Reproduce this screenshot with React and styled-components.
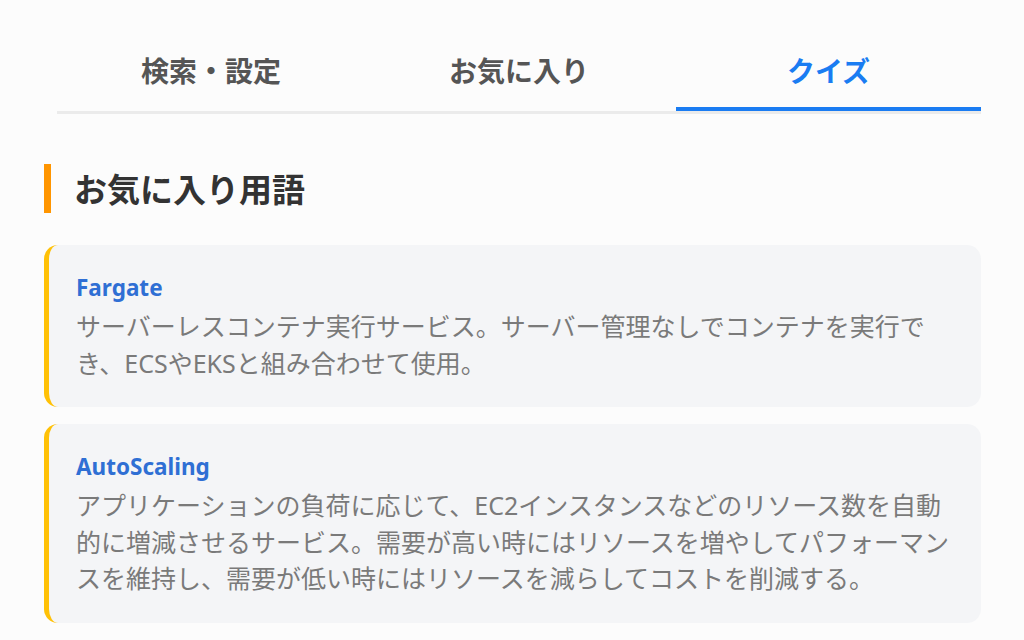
import React, { useState } from 'react';
import styled, { createGlobalStyle } from 'styled-components';

const GlobalStyle = createGlobalStyle`
    html, body {
        margin: 0;
        padding: 0;
        background: #fcfcfc;
        font-family: "Noto Sans", "Noto Sans CJK JP", sans-serif;
        overflow: hidden;
    }
    * {
        box-sizing: border-box;
    }
`;

const Page = styled.div`
    width: 1024px;
    height: 640px;
    padding: 33px 43px 0 44px;
    overflow: hidden;
`;

const TabBar = styled.div`
    display: grid;
    grid-template-columns: repeat(3, 1fr);
    margin-left: 13px;
    border-bottom: 3px solid #ebebeb;
`;

const Tab = styled.button`
    background: none;
    border: none;
    border-bottom: 4px solid ${props => props.$active ? '#1a7cf2' : 'transparent'};
    margin-left: ${props => props.$active ? '3px' : '0'};
    padding: 16px 0;
    font-family: "Noto Sans CJK JP", sans-serif;
    font-size: 28px;
    line-height: 42px;
    font-weight: 700;
    color: ${props => props.$active ? '#1a7cf2' : '#555'};
    cursor: pointer;
`;

const SectionTitle = styled.h2`
    margin: 50px 0 32px;
    border-left: 7px solid #ff9500;
    padding-left: 23px;
    font-family: "Noto Sans CJK JP", sans-serif;
    font-size: 33px;
    line-height: 49px;
    font-weight: 700;
    color: #333;
`;

const CardList = styled.div`
    display: flex;
    flex-direction: column;
    gap: 17px;
`;

const Card = styled.div`
    background: #f4f5f7;
    border-left: 5px solid #ffc107;
    border-radius: 14px;
    padding: 27px 28px 26px 27px;
`;

const Term = styled.div`
    font-size: 22.5px;
    line-height: 31px;
    font-weight: 700;
    color: #2f6fd4;
    margin-bottom: 5px;
`;

const Description = styled.p`
    margin: 0;
    font-size: 25px;
    line-height: 36.5px;
    color: #7a7a7a;
`;

const tabs = ['検索・設定', 'お気に入り', 'クイズ'];

const favorites = [
    {
        term: 'Fargate',
        text: 'サーバーレスコンテナ実行サービス。サーバー管理なしでコンテナを実行でき、ECSやEKSと組み合わせて使用。'
    },
    {
        term: 'AutoScaling',
        text: 'アプリケーションの負荷に応じて、EC2インスタンスなどのリソース数を自動的に増減させるサービス。需要が高い時にはリソースを増やしてパフォーマンスを維持し、需要が低い時にはリソースを減らしてコストを削減する。'
    },
    {
        term: 'CloudWatch',
        text: 'AWSリソースとアプリケーションを監視するサービス。'
    }
];

export default function App() {
    const [active, setActive] = useState(2);
    return (
        <Page>
            <GlobalStyle />
            <TabBar>
                {tabs.map((label, i) => (
                    <Tab key={label} $active={i === active} onClick={() => setActive(i)}>
                        {label}
                    </Tab>
                ))}
            </TabBar>
            <SectionTitle>お気に入り用語</SectionTitle>
            <CardList>
                {favorites.map(item => (
                    <Card key={item.term}>
                        <Term>{item.term}</Term>
                        <Description>{item.text}</Description>
                    </Card>
                ))}
            </CardList>
        </Page>
    );
}
